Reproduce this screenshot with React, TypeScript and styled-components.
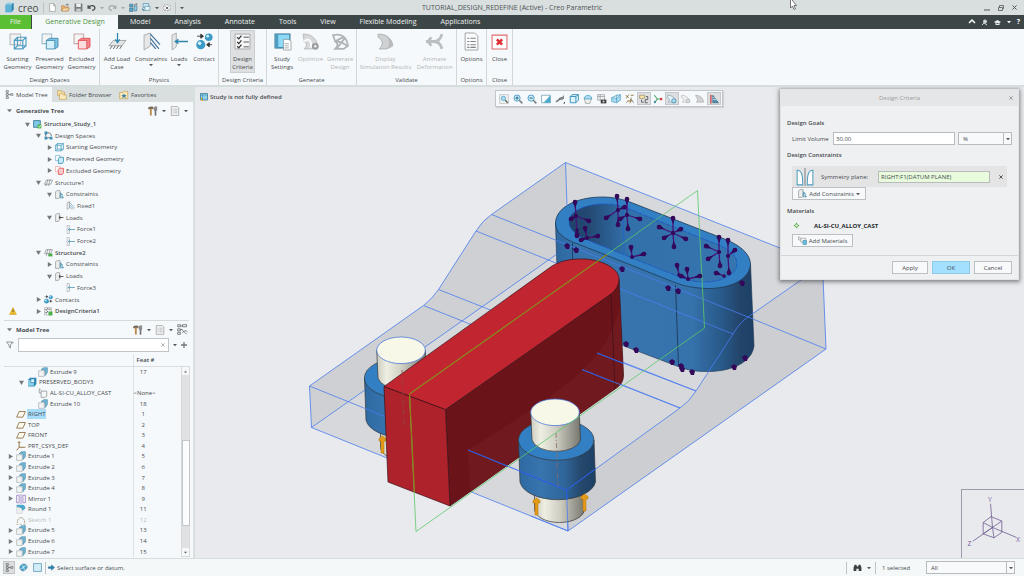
import React from 'react';
import styled, { createGlobalStyle, css } from 'styled-components';

const Global = createGlobalStyle`
  * { box-sizing: border-box; }
  body { margin: 0; background: #e9eaee; }
  body, button, input, select, table {
    font-family: "Open Sans", "Noto Sans", sans-serif;
    font-size: 6px;
    line-height: 8px;
    color: #464b4e;
  }
  button { margin: 0; padding: 0; border: 0; background: none; white-space: nowrap; }
  svg { display: block; flex: none; overflow: visible; }
`;

/* ---------- icons ---------- */

const B = '#3a93b8';
const L = '#a9dcf2';
const G = '#777b7e';

const art: Record<string, React.ReactNode> = {
  logo: <><path d="M2 4l3-3h9v10l-3 4H2z" fill="#8fc9e2" /><path d="M2 4h9v11H2z" fill="#5fb2d6" /><path d="M11 4l3-3v10l-3 4z" fill="#2b84ad" /></>,
  newDoc: <path d="M3 1h7l3 4v10H3zM10 1v4h3" fill="#fff" stroke="#888" />,
  open: <><path d="M1 14V5h5l1 2h6v7z" fill="#e8b878" stroke="#b07a3a" /><path d="M1 14l3-5h11l-3 5z" fill="#f7dcae" stroke="#b07a3a" /><path d="M8 3h5m-2-2l2 2-2 2" fill="none" stroke="#777" strokeWidth="1.5" /></>,
  save: <><path d="M1 1h14v14H1z" fill="#777d80" /><path d="M4 1h8v6H4z" fill="#f2f2f2" /><path d="M4 10h8v5H4z" fill="#c9cccd" /></>,
  undo: <path d="M2 4v5h5M3 8c3-5 11-4 11 1 0 2-2 4-5 4" fill="none" stroke="#4b4f52" strokeWidth="2.4" />,
  redo: <path d="M14 4v5H9m4-1c-3-5-11-4-11 1 0 2 2 4 5 4" fill="none" stroke="#a4a9ab" strokeWidth="2" />,
  regen: <><path d="M1 2h6v5H1zM1 9h6v6H1z" fill="#58a9c9" stroke="#3d6b80" /><path d="M9 5h5v9H9z" fill="#8fcde6" stroke="#3d6b80" /><path d="M9 3l5-2v3" stroke="#444" fill="none" /></>,
  windows: <><path d="M2 1h10v7H2z" fill="#cdeaf5" stroke="#3a7d99" /><path d="M5 6h9v7H5z" fill="#e7f6fb" stroke="#3a7d99" /><path d="M0 10l4 4" stroke="#3a7d99" strokeWidth="2" /></>,
  closeWin: <><path d="M2 2h12v11H2z" fill="#fff" stroke="#666" strokeDasharray="2 1" /><path d="M5 5l6 6m0-6l-6 6" stroke="#444" strokeWidth="1.6" /></>,
  starting: <><path d="M1 1h10v10H1z" fill="#f2f2f2" stroke="#b5b8ba" /><path d="M5 7h8v8H5zM8 4h8v8H8zM5 7l3-3m5 3l3-3m-3 11l3-3M5 15l3-3" fill="none" stroke="#4e9dc2" strokeWidth="1.1" /></>,
  preserved: <><path d="M1 1h9v9H1z" fill="#f4f4f4" stroke="#9bc" /><path d="M5 7l3-2h8v8l-3 2" fill="#7fc4e4" stroke="#3a86ab" strokeWidth=".8" /><path d="M5 7h8v8H5z" fill="#d4f0fb" stroke="#3a86ab" strokeWidth=".8" /></>,
  excluded: <><path d="M1 1h9v9H1z" fill="#f4f4f4" stroke="#c6a9a9" /><path d="M5 7l3-2h8v8l-3 2" fill="#f3868a" stroke="#e0484e" strokeWidth=".8" /><path d="M5 7h8v8H5z" fill="#fbdcdc" stroke="#e0484e" strokeWidth=".8" /></>,
  addLoad: <><path d="M4 7h12l-4 5H0z" fill="#e3e4e5" stroke="#8c9092" strokeWidth=".7" /><path d="M3 12l-2 3m5-3l-2 3m5-3l-2 3m5-3l-2 3" stroke="#555" strokeWidth=".8" /><path d="M8 0v9m-2-3l2 3 2-3" fill="none" stroke="#2e86ad" strokeWidth="1.2" /></>,
  constraints: <><path d="M1 2l6-2v12l-6 4z" fill="#e6e7e8" stroke="#9a9d9f" strokeWidth=".7" /><path d="M7 1l9 10M7 5l8 10M7 9l5 6" stroke="#3d6f99" strokeWidth="1.1" /></>,
  loads: <><path d="M1 2l4-2v13l-4 3z" fill="#e6e7e8" stroke="#9a9d9f" strokeWidth=".7" /><path d="M4 8h12M7 6L4 8l3 2" fill="none" stroke="#2e86ad" strokeWidth="1.2" /></>,
  contact: <><circle cx="12" cy="4" r="3.6" fill="#3b9bc6" /><circle cx="4.5" cy="11" r="4.3" fill="#3b9bc6" /><circle cx="11" cy="3" r="1.3" fill="#d6f1fb" /><circle cx="3.4" cy="9.6" r="1.6" fill="#d6f1fb" /><path d="M1 3h5M4.500 1L7 3 4.500 5zM15 11h-4m1.500-2L10 11l2.500 2z" stroke="#333" fill="#333" strokeWidth=".8" /></>,
  criteria: <><path d="M1 1h14v14H1z" fill="#f7f7f7" stroke="#9b9ea0" strokeWidth=".8" /><path d="M3 4l1.500 1.500L7 2.500M3 8.500L4.500 10 7 7M3 12.500L4.500 14 7 11" fill="none" stroke="#333" strokeWidth="1.2" /><path d="M9 4h5M9 8.500h5M9 13h5" stroke="#8a8d8f" strokeWidth="1.3" /></>,
  study: <><path d="M1 1h14v13H1z" fill="#8edaf6" stroke="#2b6f94" /><path d="M1 1h3v13H1z" fill="#4f9ec2" /><path d="M9 6h5l2 2v8H9z" fill="#fff" stroke="#8a9093" strokeWidth=".7" /><path d="M10 10h4m-4 2h4m-4 2h4" stroke="#8a9093" strokeWidth=".7" /></>,
  optimize: <><path d="M1 1c8 0 13 4 14 12l-5 2H2c3-3 3-5 0-7z" fill="#d6d8d9" stroke="#aeb1b3" strokeWidth=".7" /><path d="M2 8c4-4 8 0 6 6" fill="none" stroke="#f7f9fb" strokeWidth="2" /><circle cx="12.500" cy="12.500" r="3.200" fill="#9a9d9f" /><circle cx="12.500" cy="12.500" r="1.200" fill="#eee" /></>,
  generate: <path d="M1 2c8-2 13 2 14 10l-4 3H3c3-3 3-5 0-7zM3 8c3-2 8-5 9-3M5 14L12 5M3 8c4 0 9 2 12 5" fill="none" stroke="#b1b4b6" strokeWidth="1.700" />,
  simres: <><path d="M1 1c8 0 13 4 14 11l-6 3H2c4-4 4-8-1-11z" fill="#cfd1d3" stroke="#a9adaf" strokeWidth=".8" /><path d="M9 3c4 2 6 6 5 10l-4 2c2-5 2-8-1-12z" fill="#b9bcbe" /></>,
  animate: <path d="M0 8h7M15 1c-1 4-4 7-8 7M15 15c-1-4-4-7-8-7M5 4l-3 4 3 4" fill="none" stroke="#bcbfc1" strokeWidth="2.600" />,
  options: <><path d="M2 0h9l3 3v13H2z" fill="#fbfbfb" stroke="#94989a" strokeWidth=".8" /><path d="M4 5h2m1 0h5M4 8h2m1 0h5M4 11h2m1 0h5M4 13.500h2m1 0h5" stroke="#7d8284" /></>,
  close: <><path d="M1 2h14v13H1z" fill="#fff" stroke="#e06a6c" strokeWidth="1" /><path d="M5.500 6l5 5m0-5l-5 5" stroke="#dc3034" strokeWidth="2.400" /></>,
  treeTab: <path d="M2 1h4v3H2zM2 6.500h4v3H2zM2 12h4v3H2zM10 6.500h4v3h-4zM6 8h4M4 4v2.500m0 3V12" fill="none" stroke="#565b5e" strokeWidth="1.100" />,
  folder: <><path d="M1 1h6l1 2h4v6H1z" fill="#f7e0a8" stroke="#c29a4e" /><path d="M4 6h5l1 2h5v7H4z" fill="#fbe9bd" stroke="#c29a4e" /></>,
  fav: <><path d="M1 4h5l1-2h7v12H1z" fill="#fbe6b4" stroke="#c29a4e" /><path d="M8 5l1 3h3l-2 2 1 3-3-2-3 2 1-3-2-2h3z" fill="#2f7fa8" /></>,
  tools: <><path d="M0 3l3-2h5l1 4H6v10H3V5H0z" fill="#b98a4c" /><path d="M0 3l3-2h5l1 3H0z" fill="#666" /><path d="M11 1h1v4h1V1h1v6l-1 1v7h-2V8l-1-1V2z" fill="#7b8083" stroke="#555" strokeWidth=".5" /></>,
  doc: <><path d="M2 1h10l2 2v12H2z" fill="#fafafa" stroke="#85898b" /><path d="M4 5h2m1 0h5M4 8h2m1 0h5M4 11h2m1 0h5" stroke="#8a8e90" /></>,
  hide: <path d="M1 1h4v3H1zM8 1h6v3H8zM1 7h4v3H1zM1 12h4v3H1zM7 8l7 7m-6-2c2-4 6-4 7-1M5 3h3M5 8h3" fill="none" stroke="#676c6f" strokeWidth="1.200" />,
  studyTree: <><path d="M1 1h12v12H1z" fill="#7fc6e4" stroke="#2c718f" strokeWidth="1.400" /><path d="M8 8h7v7H8z" fill="#51b54a" /><path d="M10 11l1.500 2L14 9.500" stroke="#fff" fill="none" strokeWidth="1.400" /></>,
  status: <><path d="M1 1h14v13H1z" fill="#8fd3ef" stroke="#2c718f" strokeWidth="1.400" /><path d="M1 4h14M5 4v10" stroke="#2c718f" /><path d="M3 9v6h4" stroke="#e8b23a" fill="none" strokeWidth="2" /></>,
  spaces: <><path d="M1 1h5v5H1zM1 10h5v5H1zM10 10h5v5h-5z" fill="#3a8fb5" /><path d="M6 3c5 0 7 2 7 6M3 6v4m3 2h4" stroke="#444" fill="none" strokeWidth="1.300" /></>,
  cubeWire: <path d="M1 4h10v10H1zM4 1h11v10l-4 3M1 4l3-3M11 4l4-3M4 1v10h11M4 11l-3 3" fill="#e2f3fa" stroke={B} strokeWidth="1.200" />,
  cubeBlue: <><path d="M1 1h8v9H1z" fill="#fff" stroke="#6ab0cf" strokeWidth="1.200" /><path d="M6 6l2-2h7v8l-2 3H6z" fill="#c9ecf9" stroke={B} strokeWidth="1.500" /></>,
  cubeRed: <><path d="M1 1h8v9H1z" fill="#fff" stroke="#f09b9d" strokeWidth="1.200" /><path d="M6 6l2-2h7v8l-2 3H6z" fill="#fbcccd" stroke="#e8575b" strokeWidth="1.500" /></>,
  struct: <path d="M4 4h11l-3 7H1zM4 14l3-12m1 12l3-12M2 14l1-3" fill="none" stroke="#80888b" strokeWidth="1.200" />,
  struct2: <><path d="M4 3h11l-3 7H1zM4 14l3-12m1 12l3-12" fill="none" stroke="#80888b" strokeWidth="1.200" /><path d="M8 10h7v5H8z" fill="#4dae46" /></>,
  constr: <><path d="M1 3l3-2h5v11l-2 3H1z" fill="#eceded" stroke="#8d9193" strokeWidth="1.200" /><path d="M8 5l6 4m-6 0l6 5m-4-9l5 9H9z" stroke="#3f8aac" fill="none" strokeWidth="1.200" /></>,
  fixed: <><path d="M2 3l4-2v11l-4 3z" fill="#eceded" stroke="#8d9193" /><path d="M6 2l9 10M6 6l8 9M6 10l4 5" stroke="#4b86a3" /></>,
  loadsT: <><path d="M1 3l3-2h4v11l-2 3H1z" fill="#eceded" stroke="#8d9193" strokeWidth="1.200" /><path d="M7 8h8M10 5.500L7 8l3 2.500" stroke="#333" fill="none" strokeWidth="1.400" /></>,
  force: <><path d="M2 1v14M2 1h4v5m0 4v5H2" fill="none" stroke="#9a9ea0" /><path d="M4 8h12M7 5.500L4 8l3 2.500" stroke="#3a86ab" fill="none" strokeWidth="1.200" /></>,
  critTree: <><path d="M1 1h12v13H1z" fill="#f3f3f3" stroke="#9b9ea0" /><path d="M3 4l1 2 3-4M3 9l1 2 3-4M8 4h4" stroke="#333" fill="none" strokeWidth="1.200" /><path d="M8 8h7v7H8z" fill="#4dae46" /></>,
  warn: <><path d="M8 1l7 14H1z" fill="#f7c631" stroke="#c9921a" /><path d="M8 5v5m0 1.500V13" stroke="#333" strokeWidth="1.600" /></>,
  extrude: <><path d="M5 4l4-3h6v8l-4 5V5z" fill="#6fb5d4" stroke="#3f7f9c" strokeWidth=".8" /><path d="M1 6h9v9H1z" fill="#f3f4f4" stroke="#9aa0a3" strokeWidth=".9" /></>,
  body: <><path d="M5 1h10v10l-3 4H2V4z" fill="#2c89b5" /><path d="M2 5h9v9H2z" fill="#8ed0ec" /><path d="M6 3h6v6H6z" fill="#d9f1fa" stroke="#23759c" /></>,
  mat: <path d="M2 1v7h3M5 5h9v8l-3 2H5zM2 1l3 3" fill="none" stroke="#8b9092" strokeWidth="1.200" />,
  plane: <path d="M5 4h10l-4 9H1z" fill="#fffaf0" stroke="#8c7449" strokeWidth="1.400" />,
  csys: <path d="M5 1v9h10M5 10l-4 5M3 3l2-2 2 2" fill="none" stroke="#8c6f3d" strokeWidth="1.500" />,
  mirror: <path d="M1 2h4v12H1zM11 2h4v12h-4zM8 0v16" fill="none" stroke="#9b7fc0" strokeWidth="1.300" />,
  round: <><path d="M1 1h8c5 0 6 3 6 6l-5 4C10 7 7 5 1 5z" fill="#4ba6cc" /><path d="M1 5c6 0 9 2 9 6v4H1z" fill="#eef0f0" stroke="#b0b5b7" strokeWidth=".6" /></>,
  sketch: <path d="M2 13c0-12 12-12 12 0M1 15h3m2 0h3m3 0h3" fill="none" stroke="#b9b49c" strokeWidth="1.600" />,
  cubeSolid: <path d="M2 4h9v10H2zM2 4l3-3h10v9l-4 4M11 4l4-3" fill="#dff2fa" stroke={B} strokeWidth="1.500" />,
  zoomFit: <><path d="M1 1h14v14H1z" fill="#f2f2f2" stroke="#b0b4b6" /><circle cx="7" cy="7" r="3.500" fill={L} stroke={B} /><path d="M10 10l4 4" stroke="#555" strokeWidth="2" /></>,
  zoomIn: <><circle cx="6.500" cy="6.500" r="5" fill="#cdebf7" stroke={B} strokeWidth="1.300" /><path d="M4 6.500h5M6.500 4v5" stroke="#14607f" strokeWidth="1.500" /><path d="M10 10l5 5" stroke={G} strokeWidth="2.400" /></>,
  zoomOut: <><circle cx="6.500" cy="6.500" r="5" fill="#cdebf7" stroke={B} strokeWidth="1.300" /><path d="M4 6.500h5" stroke="#14607f" strokeWidth="1.500" /><path d="M10 10l5 5" stroke={G} strokeWidth="2.400" /></>,
  repaint: <><path d="M1 2h14v12H1z" fill="#fff" stroke="#4e88a0" /><path d="M15 2v12H4z" fill="#4ea9cc" /></>,
  render: <><path d="M1 13c1-5 4-3 5-6s6 0 8-6c1 6 0 8-4 8s-4 4-9 4z" fill="#777c7e" /><path d="M13 15h3v-3z" fill="#333" /></>,
  style: <><path d="M2 6h12l-3 9H4z" fill="#eef0f0" stroke="#888" /><path d="M2 8c0-8 12-8 12 0z" fill={L} stroke={B} /></>,
  viewMgr: <><path d="M1 1h11v9H1zM1 4h11M5 1v9" fill="#f2f2f2" stroke="#8b8f91" /><path d="M6 9h9v6H6z" fill="#3b3e40" /><circle cx="10.500" cy="12" r="1.700" fill="#cfd1d2" /></>,
  persp: <path d="M1 6l8-4 6-1v9l-6 4-8-2zM9 2v12M1 6l8 1 6-6" fill={L} stroke={B} />,
  datum: <><path d="M1 2l5 4M6 1L2 7M9 2h5M4 11h8M10 6l-2 9M2 14l3-3" stroke="#94753b" strokeWidth="1.400" /><path d="M9 8l5 6" stroke="#555" /></>,
  annot: <><path d="M1 2h8v5H1z" fill="#f8e6a8" stroke="#8e8460" /><path d="M11 4h3v5h-4v5h4M4 9v4h4" stroke="#444" fill="none" strokeWidth="1.200" /></>,
  spin: <><path d="M2 2l5 6-4 5M7 8h6" stroke="#4fa76a" fill="none" strokeWidth="1.800" /><circle cx="13" cy="8" r="2.200" fill="#d64545" /><circle cx="3" cy="13" r="1.800" fill="#3a8fb5" /></>,
  simA: <><path d="M1 2c7 0 12 4 13 11H2c3-3 3-5-1-7z" fill="#e3f3fa" stroke="#7d9aa8" /><circle cx="11" cy="11" r="3.500" fill="#a9dcf2" stroke="#2b7699" /></>,
  simB: <><path d="M1 2c7 0 12 4 13 11H2c3-3 3-5-1-7z" fill="#eee" stroke="#b3b6b8" /><circle cx="11" cy="11" r="3" fill="#ddd" stroke="#a3a6a8" /></>,
  simC: <path d="M1 2c7 0 12 4 13 11H2c3-3 3-5-1-10z" fill="#cfd1d2" stroke="#a9acae" />,
  result: <><path d="M6 2l9 12H6z" fill="#4f90b4" stroke="#2c5f7c" /><path d="M3 1v14" stroke="#c83a3a" strokeWidth="2" /><path d="M6 6h3M6 9h6" stroke="#fff" /></>,
  browser: <><path d="M2 11c-2-5 3-10 8-9l4 2c2 5-3 10-8 10z" fill="#4aa6cc" stroke="#2a6d8c" /><path d="M2 11l12-7M6 3l4 10" stroke="#dff2fa" strokeWidth="1.300" /></>,
  pane: <path d="M1 1h14v14H1z" fill="#d3edf8" stroke="#5a9bb8" strokeWidth="1.400" />,
  arrow: <path d="M1 6h7V2l7 6-7 6v-4H1z" fill="#2a83b0" stroke="#1d5f82" />,
  find: <path d="M1 14V8l2-5h3l1 3h2l1-3h3l2 5v6h-5v-4H6v4z" fill="#3c4042" />,
  filter: <path d="M1 2h12L9 8v6l-3-2V8zM12 5l3-3" fill="none" stroke="#6c7174" strokeWidth="1.400" />,
  symm: <><path d="M1 2c4 0 5 4 5 13H1zM15 2c-4 0-5 4-5 13h5z" fill="#fff" stroke="#4c9cbd" strokeWidth=".9" /><path d="M8 0v16" stroke="#9a9d9f" strokeWidth="1.300" /></>,
  star: <><path d="M8 1l2 3H6zM8 15l2-3H6zM1 8l3-2v4zM15 8l-3-2v4z" fill="#3fa629" /><path d="M4 8l4-4 4 4-4 4z" fill="none" stroke="#3fa629" strokeWidth="2" /></>,
  addMat: <><path d="M1 1v6h4M5 4h9v7H5zM1 1l4 3" fill="#f4f4f4" stroke="#8b9092" strokeWidth="1.100" /><path d="M9 8h6v7H9z" fill="#6fc0e2" stroke="#2f83a8" /></>,
};

const Icon = ({ n, s = 10 }: { n: string; s?: number }) => (
  <svg width={s} height={s} viewBox="0 0 16 16" aria-hidden="true">{art[n]}</svg>
);
const Down = ({ c = '#555a5d', s = 5 }: { c?: string; s?: number }) => (
  <svg width={s} height={s} viewBox="0 0 6 6" aria-hidden="true"><path d="M0 1.500h6L3 5z" fill={c} /></svg>
);
const X = ({ c = '#5a5f62', s = 5 }: { c?: string; s?: number }) => (
  <svg width={s} height={s} viewBox="0 0 6 6" aria-hidden="true"><path d="M.5 .5l5 5m0-5l-5 5" stroke={c} strokeWidth="1.200" /></svg>
);

/* ---------- frame ---------- */

const Shell = styled.div`
  display: flex; flex-direction: column; height: 100vh; overflow: hidden; background: #f6f9fb;
`;
const TitleBar = styled.header`
  display: grid; grid-template-columns: 1fr auto 1fr; align-items: center;
  height: 15px; flex: none; background: #d9dfdf; padding: 0 4px;
`;
const Title = styled.h1`
  margin: 0; font-size: 7px; font-weight: 400; line-height: 10px; color: #4b5153;
`;
const Quick = styled.div`
  display: flex; align-items: center; gap: 4px;
`;
const Brand = styled.span`
  display: flex; align-items: center; gap: 3px; font-size: 10px; line-height: 12px; color: #44494b;
`;
const Plain = styled.button`
  display: flex; align-items: center; justify-content: center;
`;
const Rule = styled.i`
  width: 1px; height: 12px; background: #bcc3c4;
`;
const WinBtns = styled.div`
  display: flex; justify-content: flex-end; gap: 8px; padding-right: 3px;
`;

const TabBar = styled.nav`
  display: flex; align-items: stretch; height: 14px; flex: none; background: #3d4647;
`;
const Tab = styled.button<{ $kind?: 'file' | 'active' }>`
  font-size: 7px; line-height: 14px; padding: 0 12px; color: #eef1f1;
  ${p => p.$kind === 'file' && css`padding: 0; width: 31px; margin-right: 1px; background: #5abf33;`}
  ${p => p.$kind === 'active' && css`padding: 0; width: 86px; background: #f6f9fb; color: #4b9240;`}
`;
const TabTools = styled.div`
  display: flex; align-items: center; gap: 6px; margin-left: auto; padding-right: 4px; color: #fff;
  span { font-weight: 700; font-size: 7px; color: #fff; }
`;

const Ribbon = styled.div`
  display: flex; height: 58px; flex: none; border-bottom: 2px solid #d6dddd;
`;
const Group = styled.section<{ $w: number }>`
  display: flex; flex-direction: column; width: ${p => p.$w}px; flex: none; border-right: 1px solid #d3d7d9; padding-top: 1px;
`;
const GroupRow = styled.div`
  display: flex; justify-content: center; flex: 1;
`;
const GroupName = styled.div`
  text-align: center; line-height: 10px; height: 10px; white-space: nowrap;
`;
const Big = styled.button<{ $w: number; $on?: boolean; $off?: boolean }>`
  display: flex; flex-direction: column; align-items: center; width: ${p => p.$w}px; height: 43px; padding-top: 3px;
  color: ${p => (p.$off ? '#b1b5b7' : '#464b4e')};
  ${p => p.$on && css`background: #dedfe1; border: 1px solid #cbcdcf; padding-top: 2px;`}
  span { margin-top: 5px; white-space: pre; text-align: center; }
`;

const Main = styled.main`
  display: flex; flex: 1; min-height: 0;
`;
const Side = styled.aside`
  width: 195px; flex: none; display: flex; flex-direction: column; border-right: 2px solid #d9dede; overflow: hidden;
`;
const SideTabs = styled.div`
  display: flex; height: 15px; background: #d9dfdf; flex: none;
`;
const SideTab = styled.button<{ $on?: boolean; $w: number }>`
  display: flex; align-items: center; gap: 2px; width: ${p => p.$w}px; padding-left: 5px;
  background: ${p => (p.$on ? '#f6f9fb' : 'none')};
`;
const PaneHead = styled.div`
  display: flex; align-items: center; height: 17px; gap: 4px; padding: 0 5px 0 7px; flex: none;
  h2 { margin: 0 auto 0 0; font-size: 6px; line-height: 8px; font-weight: 700; }
`;
const GenTree = styled.ul`
  list-style: none; margin: 0 4px; padding: 0; height: 202px; flex: none;
  display: grid; grid-auto-rows: 1fr; border-bottom: 1px solid #d6dadb; padding-bottom: 2px;
`;
const Node = styled.div<{ $pad: number; $bold?: boolean; $dim?: boolean; $sel?: boolean }>`
  display: flex; align-items: center; height: 10px; padding-left: ${p => p.$pad}px;
  font-weight: ${p => (p.$bold ? 600 : 400)};
  color: ${p => (p.$dim ? '#b8bcbe' : '#464b4e')};
  white-space: nowrap; position: relative;
  svg + span { padding: 0 1px; margin-left: 1px; background: ${p => (p.$sel ? '#a8ddf9' : 'none')}; line-height: 10px; }
`;
const Caret = styled.button`
  width: 8px; height: 8px; margin-right: 2px; display: flex; align-items: center; justify-content: center;
`;
const WarnMark = styled.i`
  position: absolute; left: 5px; top: 1px;
`;
const FilterRow = styled.div`
  display: flex; align-items: center; gap: 4px; height: 14px; padding: 0 6px; flex: none;
`;
const FilterBox = styled.label`
  display: flex; align-items: center; width: 151px; height: 14px; background: #fff; border: 1px solid #bfc4c6; padding-right: 3px;
  input { flex: 1; min-width: 0; border: 0; outline: 0; background: none; padding: 0 2px; height: 12px; }
`;
const TableArea = styled.div`
  display: flex; flex: 1; min-height: 0; overflow: hidden; margin: 2px 3px 1px 4px;
`;
const ModelTable = styled.table`
  flex: 1; border-collapse: collapse; table-layout: fixed; height: 203px;
  td, th { padding: 0; }
  th { height: 12px; font-weight: 600; line-height: 10px; text-align: left; border-bottom: 1px solid #dadddf; padding-left: 3px; }
  th + th, td + td { border-left: 1px solid #dfe2e4; }
`;
const Num = styled.td<{ $dim?: boolean; $left?: boolean }>`
  text-align: ${p => (p.$left ? 'left' : 'center')}; color: ${p => (p.$dim ? '#b8bcbe' : '#464b4e')};
  span { display: block; margin-right: ${p => (p.$left ? 0 : 28)}px; line-height: 8px; }
`;
const Scroll = styled.div`
  width: 9px; margin-top: 12px; background: #e0e1e3; border: 1px solid #d7d9db; display: flex; flex-direction: column; align-items: center;
`;
const ScrollBtn = styled.button`
  width: 7px; height: 8px; flex: none; background: #f6f8f9; display: flex; align-items: center; justify-content: center;
`;
const Thumb = styled.div`
  width: 8px; height: 86px; flex: none; background: #fbfcfd; border: 1px solid #c3c6c8; margin: 65px 0 auto;
`;

const View = styled.section`
  position: relative; flex: 1; min-width: 0; background: #e9eaee; overflow: hidden;
`;
const Scene = styled.svg`
  position: absolute; inset: 0; width: 100%; height: 100%;
`;
const ViewHead = styled.div`
  position: relative; display: grid; grid-template-columns: 1fr auto 1fr; align-items: start; padding: 3px 6px 3px 5px;
`;
const Message = styled.div`
  display: flex; align-items: center; gap: 2px; font-weight: 600; height: 13px;
`;
const ViewTools = styled.div`
  display: flex; align-items: center; height: 17px; padding: 0 1px; background: #f6f9fb; border: 1px solid #c2c6c9; box-shadow: 1px 1px 1px #d0d2d5;
`;
const VBtn = styled.button<{ $on?: boolean }>`
  width: 14px; height: 13px; display: flex; align-items: center; justify-content: center;
  ${p => p.$on && css`background: #dcdee0; border: 1px solid #c5c8ca;`}
`;
const Triad = styled.svg`
  position: absolute; right: 0; bottom: 0; width: 63px; height: 69px; border-left: 1px solid #9c9aab; border-top: 1px solid #9c9aab;
`;
const Pointer = styled.svg`
  position: absolute; left: 790px; top: 0;
`;

/* ---------- dialog ---------- */

const Dialog = styled.div`
  position: absolute; right: 5px; top: 2px; width: 239px; background: #eff0f2; display: flex; flex-direction: column;
  border: 1px solid #e3e4e5; box-shadow: 0 1px 4px 1px rgba(60, 62, 66, .6);
`;
const DlgTitle = styled.div`
  display: grid; grid-template-columns: 1fr auto 1fr; align-items: center; height: 16px; background: #e5e6e7; color: #989b9d; padding: 0 5px;
  button { justify-self: end; }
`;
const DlgBody = styled.div`
  padding: 13px 6px 8px; display: flex; flex-direction: column;
`;
const Heading = styled.h3<{ $top?: number }>`
  margin: ${p => p.$top ?? 0}px 0 0; font-size: 6px; line-height: 8px; font-weight: 600;
`;
const Field = styled.div`
  display: flex; align-items: center; height: 13px; margin: 5px 0 6px 5px; gap: 3px;
  label { width: 38px; white-space: nowrap; }
`;
const Text = styled.input<{ $green?: boolean }>`
  flex: 1; min-width: 0; height: ${p => (p.$green ? 12 : 13)}px; padding: 0 2px; border: 1px solid #b9bcbe; border-radius: 0;
  background: ${p => (p.$green ? '#e8fbdc' : '#fff')}; outline: 0;
`;
const SelectBox = styled.div<{ $w: number }>`
  position: relative; width: ${p => p.$w}px; height: 13px; flex: none;
  select { display: block; appearance: none; width: 100%; height: 100%; border: 1px solid #b9bcbe; border-radius: 0; background: #f8f9fa; padding: 0 4px; }
  i { position: absolute; right: 1px; top: 1px; bottom: 1px; width: 8px; border-left: 1px solid #b9bcbe; display: flex; align-items: center; justify-content: center; pointer-events: none; }
`;
const Constraint = styled.div`
  display: flex; align-items: center; height: 21px; margin: 7px 5px 0; padding: 0 3px 0 4px; background: #e4e4e5;
  label { width: 64px; flex: none; padding-left: 7px; white-space: nowrap; }
  input { flex: none; width: 112px; }
  button { margin-left: auto; width: 6px; }
`;
const Boxed = styled.button<{ $w: number; $primary?: boolean; $in?: boolean }>`
  display: flex; align-items: center; justify-content: center; gap: 2px; height: 13px; width: ${p => p.$w}px;
  background: ${p => (p.$primary ? '#a3dfff' : '#f8f9fa')}; border: 1px solid ${p => (p.$primary ? '#8fcbeb' : '#bdc0c2')};
  margin-left: ${p => (p.$in ? 5 : 0)}px;
`;
const Material = styled.div`
  display: flex; align-items: center; gap: 14px; height: 11px; margin: 5px 0 3px 6px; font-weight: 700; color: #25282a;
`;
const DlgFoot = styled.div`
  display: flex; justify-content: flex-end; gap: 4px; padding: 5px 6px; border-top: 1px solid #d3d5d7;
`;

const Status = styled.footer`
  display: flex; align-items: center; height: 18px; flex: none; border-top: 1px solid #d6dddd; background: #f4f8f9; padding: 0 9px 0 3px; gap: 2px;
`;
const SBtn = styled.button<{ $on?: boolean }>`
  width: 12px; height: 13px; display: flex; align-items: center; justify-content: center;
  ${p => p.$on && css`background: #dcdee0; border: 1px solid #c0c4c6;`}
`;
const Right = styled.div`
  margin-left: auto; display: flex; align-items: center; gap: 4px;
`;
const Picked = styled.span`
  width: 42px; white-space: nowrap; padding-left: 2px;
`;

/* ---------- data ---------- */

type GenRow = [number, string, string, ('v' | '>')?, boolean?, boolean?];
const genRows: GenRow[] = [
  [0, 'Structure_Study_1', 'studyTree', 'v', true],
  [1, 'Design Spaces', 'spaces', 'v'],
  [2, 'Starting Geometry', 'cubeWire', '>'],
  [2, 'Preserved Geometry', 'cubeBlue', '>'],
  [2, 'Excluded Geometry', 'cubeRed', '>'],
  [1, 'Structure1', 'struct', 'v'],
  [2, 'Constraints', 'constr', 'v'],
  [3, 'Fixed1', 'fixed'],
  [2, 'Loads', 'loadsT', 'v'],
  [3, 'Force1', 'force'],
  [3, 'Force2', 'force'],
  [1, 'Structure2', 'struct2', 'v', true],
  [2, 'Constraints', 'constr', '>'],
  [2, 'Loads', 'loadsT', 'v'],
  [3, 'Force3', 'force'],
  [1, 'Contacts', 'contact', '>'],
  [1, 'DesignCriteria1', 'critTree', '>', true, true],
];

type ModelRow = [number, string, string, string, ('v' | '>')?];
const modelRows: ModelRow[] = [
  [2, 'Extrude 9', 'extrude', '17'],
  [1, 'PRESERVED_BODY3', 'body', '', 'v'],
  [2, 'AL-SI-CU_ALLOY_CAST', 'mat', '<None>'],
  [2, 'Extrude 10', 'extrude', '18'],
  [0, 'RIGHT', 'plane', '1'],
  [0, 'TOP', 'plane', '2'],
  [0, 'FRONT', 'plane', '3'],
  [0, 'PRT_CSYS_DEF', 'csys', '4'],
  [0, 'Extrude 1', 'extrude', '5', '>'],
  [0, 'Extrude 2', 'extrude', '6', '>'],
  [0, 'Extrude 3', 'extrude', '7', '>'],
  [0, 'Extrude 4', 'extrude', '8', '>'],
  [0, 'Mirror 1', 'mirror', '9', '>'],
  [0, 'Round 1', 'round', '11'],
  [0, 'Sketch 1', 'sketch', '12'],
  [0, 'Extrude 5', 'extrude', '13', '>'],
  [0, 'Extrude 6', 'extrude', '14', '>'],
  [0, 'Extrude 7', 'extrude', '15', '>'],
];

const Twist = ({ dir }: { dir?: 'v' | '>' }) => (
  <Caret tabIndex={dir ? 0 : -1} aria-label={dir === 'v' ? 'Collapse' : dir ? 'Expand' : undefined} aria-hidden={!dir}>
    {dir && (
      <svg width="5" height="5" viewBox="0 0 6 6">
        <path d={dir === 'v' ? 'M0 1h6L3 6z' : 'M1 0v6l5-3z'} fill="#75797c" />
      </svg>
    )}
  </Caret>
);

/* ---------- 3D model ---------- */

const edge = '#4a7cf0';

/* hub = where the arrows meet; tips = far ends carrying the cone heads */
const stars: [number, number, [number, number][]][] = [
  [576, 216, [[575, 202], [589, 221], [577, 235], [571, 219]]],
  [618, 210, [[617, 196], [606, 218], [618, 225], [625, 207]]],
  [627, 215, [[627, 199], [640, 219], [628, 229], [620, 219]]],
  [673, 233, [[673, 218], [659, 227], [686, 239], [674, 247], [664, 238], [681, 229]]],
  [719, 252, [[719, 237], [706, 246], [708, 259], [720, 266]]],
  [728, 256, [[728, 240], [729, 273], [735, 250]]],
  [724, 276, [[716, 273]]],
  [577, 230, [[577, 236]]],
  [587, 238, [[585, 228], [598, 236], [581, 240]]],
  [632, 257, [[631, 247], [644, 254]]],
  [679, 275, [[677, 265]]],
  [688, 279, [[687, 269], [700, 276], [681, 276]]],
];
const dots = [
  [567, 246], [576, 250], [622, 269], [668, 288], [678, 291], [742, 283], [626, 344], [636, 350],
  [672, 362], [681, 366], [682, 369], [692, 372], [734, 367], [745, 358],
];

/* thin stem from the hub, cone widening outwards, rounded end */
const Cone = ({ hx, hy, x, y }: { hx: number; hy: number; x: number; y: number }) => {
  const d = Math.hypot(x - hx, y - hy);
  const ux = (x - hx) / d, uy = (y - hy) / d;
  const bx = x - ux * 6, by = y - uy * 6;
  return (
    <g fill="#33085a">
      <path d={`M${hx} ${hy}L${x} ${y}`} stroke="#45127a" strokeWidth="1.300" />
      <path d={`M${bx} ${by}L${x - uy * 2.400} ${y + ux * 2.400}L${x + uy * 2.400} ${y - ux * 2.400}z`} />
      <circle cx={x} cy={y} r="2.300" />
      <circle cx={hx} cy={hy} r="1.800" />
    </g>
  );
};

const Pin = ({ x, y }: { x: number; y: number }) => (
  <path d={`M${x} ${y}l3.500 2.500v2.500h-2V${y + 17}h-3V${y + 5}h-2v-2.500z`} fill="#e39a18" stroke="#b87708" strokeWidth=".5" />
);

const Post = () => (
  <g strokeWidth=".7" stroke="#33363a">
    <path d="M534.500 495V509A25 13.500 0 0 0 584.500 509V495z" fill="url(#ivory)" />
    <path d="M518.500 440L520 482A38 20 0 0 0 595.500 482L594 440z" fill="url(#drum)" />
    <ellipse cx="556.200" cy="440" rx="37.800" ry="20.300" fill="#3280c3" />
    <path d="M530.700 412L532 440A24.500 13.300 0 0 0 580.500 440L579.300 412z" fill="url(#ivory)" />
    <ellipse cx="555" cy="412.300" rx="24.300" ry="13.300" fill="#f7f8e8" stroke="#3a6cd8" />
    <Pin x={536.500} y={498} />
    <Pin x={584.500} y={494} />
  </g>
);

const Model = () => (
  <Scene viewBox="195 87 829 471" preserveAspectRatio="xMinYMin slice" role="img" aria-label="Generative design model">
    <defs>
      <linearGradient id="drum"><stop offset="0" stopColor="#2e69a2" /><stop offset=".3" stopColor="#3874ae" /><stop offset=".6" stopColor="#2f659a" /><stop offset=".82" stopColor="#25476b" /><stop offset="1" stopColor="#1c4066" /></linearGradient>
      <linearGradient id="ivory"><stop offset="0" stopColor="#cbcbbf" /><stop offset=".2" stopColor="#eeeee2" /><stop offset=".5" stopColor="#cfcfc4" /><stop offset="1" stopColor="#77776f" /></linearGradient>
      <linearGradient id="slotSide" gradientUnits="userSpaceOnUse" x1="556" y1="0" x2="754" y2="0"><stop offset="0" stopColor="#2d679f" /><stop offset=".12" stopColor="#3874ae" /><stop offset=".68" stopColor="#3673ad" /><stop offset=".84" stopColor="#285988" /><stop offset=".93" stopColor="#23446a" /><stop offset="1" stopColor="#1c4066" /></linearGradient>
      <linearGradient id="slotIn" gradientUnits="userSpaceOnUse" x1="569" y1="0" x2="738" y2="0"><stop offset="0" stopColor="#1f436a" /><stop offset=".12" stopColor="#234a74" /><stop offset=".34" stopColor="#3270aa" /><stop offset="1" stopColor="#3775b0" /></linearGradient>
    </defs>

    {/* design envelope */}
    <path d="M565.500 162.500L491.500 214.500Q483 220 476 231L438.500 289.500Q432 299 423.500 305.500L309.500 386L311.500 427.500L568 531L826 349L822.500 265z" fill="#d7d8db" />
    <path d="M565.500 162.500L491.500 214.500Q483 220 476 231L438.500 289.500Q432 299 423.500 305.500L309.500 386L311.500 427.500L567 247z" fill="#cfd0d3" />
    <path d="M822.500 265L748 317Q740 322 733 334L696 391Q689 402 680 408L566.500 490L568 531L826 349z" fill="#cdced1" />

    {/* slotted ring */}
    <path d="M555.500 223L558 300L624 346L678 366.500C686 370 695 371.500 706 371.500C732 372 752 362 754 346L750.500 264z" fill="url(#slotSide)" stroke="#1d3450" strokeWidth=".6" />
    <path d="M555.500 223C556 208 575 197 603 197C613 197 622 199 630 202L727 240C741 246 750 254 750.500 264C750 279 731 289 706 288.500C694 288 684 286 676 283L578 244C563 239 555.500 232 555.500 223z" fill="#327fc3" stroke="#1f3a56" strokeWidth=".8" />
    <path d="M569 222C569 211 585 204 605 204C612 204 618 205 624 207L716 244C729 249 737 256 737 264C736 275 722 282 704 282C695 282 688 280 682 278L590 241C576 236 569 229 569 222z" fill="url(#slotIn)" stroke="#1b55c4" strokeWidth=".8" strokeDasharray="5 1" />
    <path d="M572.500 243V262M675.500 285L678.500 366" stroke="#163252" strokeWidth=".8" />
    <path d="M623 208L624 254" stroke="#1b60d8" strokeWidth=".6" />

    <g transform="translate(-154 -62)"><Post /></g>

    <g fill="none" stroke={edge} strokeWidth=".8">
      <path d="M565.500 162.500L491.500 214.500Q483 220 476 231L438.500 289.500Q432 299 423.500 305.500L309.500 386L311.500 427.500L568 531L826 349L822.500 265z" />
      <path d="M565.500 162.500L567 206M311.500 427.500L365 390M425 347L557 254M748 317L826 349" />
      <path d="M491.500 214.500L748 317M476 231L733 334M438.500 289.500L696 391M423.500 305.500L680 408M309.500 386L566.500 490" />
      <path d="M822.500 265L748 317Q740 322 733 334L696 391Q689 402 680 408L566.500 490L568 531" />
    </g>

    {/* excluded body */}
    <g stroke="#3b1015" strokeWidth=".7" strokeLinejoin="round">
      <path d="M445.500 409.500L611 294C616 290 619 285 619 279L623.500 375C623.500 382 620 386 615 389L450 506z" fill="#6a141a" />
      <path d="M468 450L470 492L615 389Q622 384 623 375L620 306C614 332 604 346 594 358C570 386 524 415 468 450z" fill="#701a1f" stroke="none" />
      <path d="M384 386.500L445.500 409.500L450 506L388 482z" fill="#ad222b" />
      <path d="M384 386.500L552 266C562 260 573 258.500 586 259C606 261 619 270 619 279C619 285 616 290 611 294L445.500 409.500z" fill="#c12530" />
      <path d="M611 294L615 389" />
    </g>
    <path d="M402 370L404 426" stroke="#8c4a4a" strokeWidth=".8" strokeDasharray="5 2 1 2" />

    <Post />
    <path d="M556 433L558 487" stroke="#8a6a66" strokeWidth=".8" strokeDasharray="5 2 1 2" />
    <g stroke={edge} strokeWidth=".8" fill="none">
      <path d="M597 353L696 391M582 369.500L680 408M468 450L566.500 490M566.500 490L596 468.500M566.500 490L568 531M531 516L568 531" />
    </g>
    <path d="M597 353L623 363.500M582 369.500L613 382M468 450L508 466.500M519 471L566.500 490L596 468.500M566.500 490L567 500" stroke="#2456e0" strokeWidth=".9" fill="none" />

    {/* symmetry datum */}
    <g fill="none" strokeWidth=".8">
      <path d="M697.500 190.500L704.500 328L416 531.500L409.500 394z" stroke="#5cc96a" />
      <path d="M607 254.500L409.500 394L414.500 492" stroke="#8f7f16" strokeWidth="1.100" />
    </g>

    {stars.map(([hx, hy, tips]) => tips.map(([x, y]) => <Cone key={`${x}-${y}`} hx={hx} hy={hy} x={x} y={y} />))}
    {dots.map(([x, y]) => <path key={`${x}.${y}`} d={`M${x - 3} ${y - 1}l3-2 3 2-1 4h-3z`} fill="#33085a" />)}
  </Scene>
);

/* ---------- ribbon ---------- */

type BigDef = [string, string, number, ('on' | 'off' | 'menu')?];
const groups: [string, BigDef[], number][] = [
  ['Design Spaces', [['Starting\nGeometry', 'starting', 32], ['Preserved\nGeometry', 'preserved', 32], ['Excluded\nGeometry', 'excluded', 32]], 100],
  ['Physics', [['Add Load\nCase', 'addLoad', 34], ['Constraints', 'constraints', 34, 'menu'], ['Loads', 'loads', 22, 'menu'], ['Contact', 'contact', 28]], 119],
  ['Design Criteria', [['Design\nCriteria', 'criteria', 25, 'on']], 48],
  ['Generate', [['Study\nSettings', 'study', 28], ['Optimize', 'optimize', 29, 'off'], ['Generate\nDesign', 'generate', 30, 'off']], 90],
  ['Validate', [['Display\nSimulation Results', 'simres', 56, 'off'], ['Animate\nDeformation', 'animate', 42, 'off']], 100],
  ['Options', [['Options', 'options', 28]], 30],
  ['Close', [['Close', 'close', 24]], 26],
];

const viewIcons: [string, boolean?][] = [
  ['zoomFit'], ['zoomIn'], ['zoomOut'], ['repaint'], ['render'], ['cubeSolid'], ['style'], ['viewMgr'], ['persp'],
  ['datum'], ['annot', true], ['spin'], ['simA', true], ['simB'], ['simC'], ['result', true],
];

export default function App() {
  return (
    <Shell>
      <Global />
      <TitleBar>
        <Quick>
          <Brand><Icon n="logo" s={11} />creo</Brand>
          <Rule />
          {['newDoc', 'open', 'save', 'undo'].map(n => <Plain key={n} aria-label={n}><Icon n={n} s={9} /></Plain>)}
          <Down s={4} c="#a4a9ab" />
          <Plain aria-label="redo"><Icon n="redo" s={9} /></Plain>
          <Down s={4} c="#a4a9ab" />
          {['regen', 'windows'].map(n => <Plain key={n} aria-label={n}><Icon n={n} s={9} /></Plain>)}
          <Down s={4} />
          <Plain aria-label="close window"><Icon n="closeWin" s={8} /></Plain>
          <Rule />
          <Down s={4} />
        </Quick>
        <Title>TUTORIAL_DESIGN_REDEFINE (Active) - Creo Parametric</Title>
        <WinBtns>
          <Plain aria-label="Minimize"><svg width="6" height="6" viewBox="0 0 6 6"><path d="M0 5h6" stroke="#555" /></svg></Plain>
          <Plain aria-label="Restore"><svg width="6" height="6" viewBox="0 0 6 6"><path d="M.5 2.500h4v3h-4zM1.500 2.500v-2h4v3h-1" fill="none" stroke="#555" strokeWidth=".8" /></svg></Plain>
          <Plain aria-label="Close window"><X c="#555" /></Plain>
        </WinBtns>
      </TitleBar>

      <TabBar>
        <Tab $kind="file">File</Tab>
        <Tab $kind="active">Generative Design</Tab>
        {['Model', 'Analysis', 'Annotate', 'Tools', 'View', 'Flexible Modeling', 'Applications'].map(t => <Tab key={t}>{t}</Tab>)}
        <TabTools>
          <svg width="6" height="6" viewBox="0 0 6 6"><path d="M0 4l3-3 3 3" fill="none" stroke="#fff" strokeWidth="1.500" /></svg>
          <svg width="7" height="7" viewBox="0 0 7 7"><circle cx="4" cy="2.500" r="2" fill="#cfd4d4" /><path d="M1 6l2-2 3 2" stroke="#cfd4d4" fill="none" /></svg>
          <svg width="7" height="7" viewBox="0 0 7 7"><path d="M0 3l3.500-2L7 3 3.500 5zM1.500 4v2h4V4" fill="#e8ebeb" /></svg>
          <Down c="#fff" s={4} />
          <span>?</span>
        </TabTools>
      </TabBar>

      <Ribbon>
        {groups.map(([name, items, w]) => (
          <Group key={name} $w={w}>
            <GroupRow>
              {items.map(([label, icon, bw, state]) => (
                <Big key={label} $w={bw} $on={state === 'on'} $off={state === 'off'} disabled={state === 'off'}>
                  <Icon n={icon} s={17} />
                  <span>{label}</span>
                  {state === 'menu' && <Down s={4} />}
                </Big>
              ))}
            </GroupRow>
            <GroupName>{name}</GroupName>
          </Group>
        ))}
      </Ribbon>

      <Main>
        <Side>
          <SideTabs>
            <SideTab $on $w={52}><Icon n="treeTab" s={9} />Model Tree</SideTab>
            <SideTab $w={62}><Icon n="folder" s={10} />Folder Browser</SideTab>
            <SideTab $w={60}><Icon n="fav" s={10} />Favorites</SideTab>
          </SideTabs>
          <PaneHead>
            <Down c="#75797c" />
            <h2>Generative Tree</h2>
            <Icon n="tools" /><Down s={4} /><Icon n="doc" /><Down s={4} />
          </PaneHead>
          <GenTree>
            {genRows.map(([lvl, label, icon, dir, bold, warn], i) => (
              <li key={i}>
                <Node $pad={19 + lvl * 11} $bold={bold}>
                  {warn && <WarnMark><Icon n="warn" s={8} /></WarnMark>}
                  <Twist dir={dir} />
                  <Icon n={icon} s={9} />
                  <span>{label}</span>
                </Node>
              </li>
            ))}
          </GenTree>
          <PaneHead>
            <Down c="#75797c" />
            <h2>Model Tree</h2>
            <Icon n="tools" /><Down s={4} /><Icon n="doc" /><Down s={4} /><Icon n="hide" s={11} />
          </PaneHead>
          <FilterRow>
            <Icon n="filter" s={8} />
            <FilterBox><input aria-label="Filter tree" /><X c="#9a9ea0" s={4} /></FilterBox>
            <Down s={4} />
            <svg width="6" height="6" viewBox="0 0 6 6"><path d="M0 3h6M3 0v6" stroke="#777" strokeWidth="1.300" /></svg>
          </FilterRow>
          <TableArea>
            <ModelTable>
              <colgroup><col /><col width="48" /></colgroup>
              <thead><tr><th aria-label="Name" /><th>Feat #</th></tr></thead>
              <tbody>
                {modelRows.map(([lvl, label, icon, num, dir]) => (
                  <tr key={label}>
                    <td>
                      <Node $pad={2 + lvl * 11} $sel={label === 'RIGHT'} $dim={label === 'Sketch 1'}>
                        <Twist dir={dir} />
                        <Icon n={icon} s={10} />
                        <span>{label}</span>
                      </Node>
                    </td>
                    <Num $dim={num === '12'} $left={num === '<None>'}>{num && <span>{num}</span>}</Num>
                  </tr>
                ))}
              </tbody>
            </ModelTable>
            <Scroll>
              <ScrollBtn aria-label="Scroll up"><svg width="3" height="3" viewBox="0 0 6 6"><path d="M0 5h6L3 1z" fill="#777" /></svg></ScrollBtn>
              <Thumb />
              <ScrollBtn aria-label="Scroll down"><Down s={3} /></ScrollBtn>
            </Scroll>
          </TableArea>
        </Side>

        <View>
          <Model />
          <Triad viewBox="961 489 63 69">
            <path d="M990.500 516L1001.500 520.500V532L993.500 537.500L982.500 533.500V522zM992 527L990 503M992 527L1016 537M992 527L972 541M982.500 522L992 527L1001.500 520.500M982.500 533.500L992 527L993.500 537.500" fill="none" stroke="#6d5a8e" strokeWidth=".8" />
            <g fill="#7a5a9e" fontSize="7" textAnchor="middle"><text x="989.500" y="501">Y</text><text x="1018" y="542">X</text><text x="968.500" y="546">Z</text></g>
          </Triad>
          <ViewHead>
            <Message><Icon n="status" s={8} />Study is not fully defined</Message>
            <ViewTools>
              {viewIcons.map(([n, on]) => <VBtn key={n} $on={on} aria-label={n}><Icon n={n} s={10} /></VBtn>)}
            </ViewTools>
          </ViewHead>

          <Dialog role="dialog" aria-label="Design Criteria">
            <DlgTitle><i /><span>Design Criteria</span><Plain aria-label="Close"><X c="#888c8e" s={4} /></Plain></DlgTitle>
            <DlgBody>
              <Heading>Design Goals</Heading>
              <Field>
                <label htmlFor="vol">Limit Volume</label>
                <Text id="vol" defaultValue="30.00" />
                <SelectBox $w={54}><select aria-label="Unit"><option>%</option></select><i><Down s={4} /></i></SelectBox>
              </Field>
              <Heading>Design Constraints</Heading>
              <Constraint>
                <Icon n="symm" s={18} />
                <label htmlFor="sym">Symmetry plane:</label>
                <Text id="sym" $green defaultValue="RIGHT:F1(DATUM PLANE)" />
                <Plain aria-label="Remove"><X c="#333" s={4} /></Plain>
              </Constraint>
              <Boxed $w={74} $in><Icon n="constr" s={9} />Add Constraints<Down s={4} /></Boxed>
              <Heading $top={7}>Materials</Heading>
              <Material><Icon n="star" s={7} />AL-SI-CU_ALLOY_CAST</Material>
              <Boxed $w={61} $in><Icon n="addMat" s={9} />Add Materials</Boxed>
            </DlgBody>
            <DlgFoot>
              <Boxed $w={36}>Apply</Boxed>
              <Boxed $w={38} $primary>OK</Boxed>
              <Boxed $w={38}>Cancel</Boxed>
            </DlgFoot>
          </Dialog>
        </View>
      </Main>

      <Status>
        <SBtn $on aria-label="Model tree"><Icon n="treeTab" s={9} /></SBtn>
        <SBtn aria-label="Browser"><Icon n="browser" s={9} /></SBtn>
        <SBtn aria-label="Full screen"><Icon n="pane" s={9} /></SBtn>
        <Rule />
        <Icon n="arrow" s={7} />
        <span>Select surface or datum.</span>
        <Right>
          <Rule />
          <SBtn aria-label="Find"><Icon n="find" s={9} /></SBtn>
          <Down s={4} />
          <Rule />
          <Picked>1 selected</Picked>
          <SelectBox $w={89}><select aria-label="Selection filter"><option>All</option></select><i><Down s={4} /></i></SelectBox>
        </Right>
      </Status>
      <Pointer width="7" height="10" viewBox="0 0 7 10" aria-hidden="true">
        <path d="M.5 -2v10l2-2 1.500 3.500 1.500-.7L4 5.500h2.500z" fill="#fff" stroke="#444" strokeWidth=".7" />
      </Pointer>
    </Shell>
  );
}
